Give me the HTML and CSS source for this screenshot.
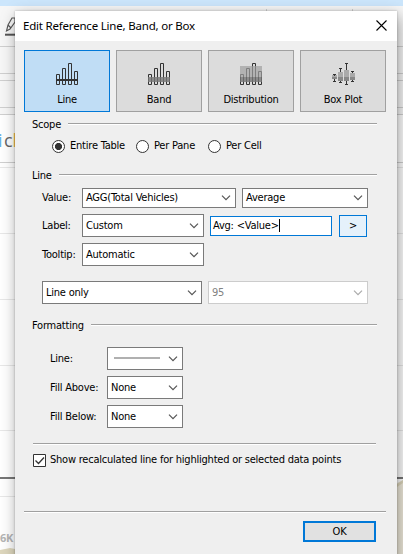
FILE: index.html
```
<!DOCTYPE html>
<html lang="en">
<head>
<meta charset="utf-8">
<title>Edit Reference Line, Band, or Box</title>
<link rel="stylesheet" href="styles.css">
</head>
<body>
<svg class="backdrop" width="403" height="554" viewBox="0 0 403 554" aria-hidden="true">
  <rect width="403" height="554" fill="#fff"/>
  <rect y="6" width="403" height="108" fill="#f7f7f7"/>
  <rect width="403" height="6" fill="#cce6fc"/>
  <g fill="#d0d0d0">
    <path d="M0 46h403v1H0zM0 73h403v1H0zM0 80h403v1H0zM0 107h403v1H0zM0 114h403v1H0zM0 162h403v1H0zM352 9h1v3h-1zM266 9h1v3h-1z"/>
  </g>
  <path fill="#e8e8e8" d="M0 167h403v1H0zM0 233h403v1H0zM0 299h403v1H0zM0 365h403v1H0zM0 430h403v1H0zM0 496h403v1H0z"/>
  <path fill="#777" d="M0 477h403v2H0z"/>
  <path fill="#f0ebdc" d="M397 483l6-3v74h-6z"/>
  <path fill="#ded7bd" d="M0 550l10-2 5 1v5H0zM397 484l6-4v3l-6 4z"/>
  <g fill="none" stroke="#555" stroke-width="1.1">
    <path d="M6.500 31l1.500-6 4-7h3v4l-5 7z M8 25l3 3"/>
    <path d="M5 34.700h11" stroke-width="2"/>
  </g>
  <g class="backdrop-title"><text x="-2" y="147" fill="#69aee5">i</text><text x="4" y="147" fill="#666">c</text><text x="12.500" y="147" fill="#f2b84b">h</text></g>
  <text class="axis-text" x="0" y="542">6K</text>
</svg>

<main class="dialog">
  <header class="titlebar">
    <h1>Edit Reference Line, Band, or Box</h1>
    <svg class="close" width="11" height="11" viewBox="0 0 11 11"><path d="M.5.5l10 10M10.500.5l-10 10" fill="none" stroke="#000" stroke-width="1.100"/></svg>
  </header>

  <nav class="tabs">
    <button class="tab active">
      <svg width="22" height="22" viewBox="0 0 22 22"><g fill="none" stroke="#333"><path d="M.5 11.500h3v10h-3zM6.500 5.500h3v16h-3zM12.500.5h3v21h-3zM18.500 8.500h3v13h-3z"/></g><path d="M0 16h22v2H0z" fill="#333"/></svg>
      <span>Line</span>
    </button>
    <button class="tab">
      <svg width="22" height="22" viewBox="0 0 22 22"><g fill="none" stroke="#333"><path d="M.5 11.500h3v10h-3zM6.500 5.500h3v16h-3zM12.500.5h3v21h-3zM18.500 8.500h3v13h-3z"/></g><path d="M0 14h22v5H0z" fill="#777" fill-opacity=".8"/></svg>
      <span>Band</span>
    </button>
    <button class="tab">
      <svg width="22" height="22" viewBox="0 0 22 22"><g fill="none" stroke="#333"><path d="M.5 11.500h3v10h-3zM6.500 5.500h3v16h-3zM12.500.5h3v21h-3zM18.500 8.500h3v13h-3z"/></g><path d="M0 3h22v11H0z" fill="#a0a0a0" fill-opacity=".7"/><path d="M0 14h22v5H0z" fill="#777" fill-opacity=".8"/></svg>
      <span>Distribution</span>
    </button>
    <button class="tab">
      <svg width="23" height="22" viewBox="0 0 23 22"><path d="M0 12h5v3H0zM6 9h5v5H6zM12 7h5v7h-5zM18 10h5v4h-5z" fill="#aaa"/><path d="M0 14h5v2H0zM6 14h5v4H6zM12 14h5v4h-5zM18 14h5v3h-5z" fill="#888"/><path d="M1 11.500h3M1 18.500h3M7 5.500h3M7 19.500h3M13 .5h3M13 21.500h3M19 8.500h3M19 18.500h3M2.500 11v2M2.500 16v3M8.500 5v4M8.500 18v2M14.500 0v7M14.500 18v4M20.500 8v2M20.500 17v2" fill="none" stroke="#333"/></svg>
      <span>Box Plot</span>
    </button>
  </nav>

  <div class="section scope"><h2>Scope</h2><i></i></div>
  <div class="radios">
    <label class="r1"><i class="radio on"></i><span>Entire Table</span></label>
    <label class="r2"><i class="radio"></i><span>Per Pane</span></label>
    <label class="r3"><i class="radio"></i><span>Per Cell</span></label>
  </div>

  <div class="section line"><h2>Line</h2><i></i></div>
  <div class="row value-row">
    <span class="label">Value:</span>
    <div class="select s154"><span>AGG(Total Vehicles)</span><svg class="chev" width="10" height="6" viewBox="0 0 10 6"><path d="M1 .7l4 4 4-4"/></svg></div>
    <div class="select s126"><span>Average</span><svg class="chev" width="10" height="6" viewBox="0 0 10 6"><path d="M1 .7l4 4 4-4"/></svg></div>
  </div>
  <div class="row label-row">
    <span class="label">Label:</span>
    <div class="select s122"><span>Custom</span><svg class="chev" width="10" height="6" viewBox="0 0 10 6"><path d="M1 .7l4 4 4-4"/></svg></div>
    <div class="input"><span>Avg: &lt;Value&gt;</span><i class="caret"></i></div>
    <button class="more">&gt;</button>
  </div>
  <div class="row tooltip-row">
    <span class="label">Tooltip:</span>
    <div class="select s122"><span>Automatic</span><svg class="chev" width="10" height="6" viewBox="0 0 10 6"><path d="M1 .7l4 4 4-4"/></svg></div>
  </div>
  <div class="row kind-row">
    <div class="select s160"><span>Line only</span><svg class="chev" width="10" height="6" viewBox="0 0 10 6"><path d="M1 .7l4 4 4-4"/></svg></div>
    <div class="select s160 disabled"><span>95</span><svg class="chev" width="10" height="6" viewBox="0 0 10 6"><path d="M1 .7l4 4 4-4"/></svg></div>
  </div>

  <div class="section formatting"><h2>Formatting</h2><i></i></div>
  <div class="format">
    <span>Line:</span>
    <div class="select"><b class="sample"></b><svg class="chev" width="10" height="6" viewBox="0 0 10 6"><path d="M1 .7l4 4 4-4"/></svg></div>
    <span>Fill Above:</span>
    <div class="select"><span>None</span><svg class="chev" width="10" height="6" viewBox="0 0 10 6"><path d="M1 .7l4 4 4-4"/></svg></div>
    <span>Fill Below:</span>
    <div class="select"><span>None</span><svg class="chev" width="10" height="6" viewBox="0 0 10 6"><path d="M1 .7l4 4 4-4"/></svg></div>
  </div>

  <div class="rule upper"></div>
  <label class="check"><svg width="13" height="13" viewBox="0 0 13 13"><path d="M.5.5h12v12H.5z" fill="#fff" stroke="#333"/><path d="M2.500 6.500l3 3 5.500-6" fill="none" stroke="#333" stroke-width="1.300"/></svg><span>Show recalculated line for highlighted or selected data points</span></label>
  <div class="rule lower"></div>
  <button class="ok">OK</button>
</main>
</body>
</html>
```
FILE: styles.css
```
* { box-sizing: border-box; }
body {
  margin: 0;
  width: 403px;
  height: 554px;
  overflow: hidden;
  position: relative;
  font: 11px/16px "DejaVu Sans Condensed", "Noto Sans", sans-serif;
  letter-spacing: -0.22px;
  color: #000;
}
.backdrop { position: absolute; left: 0; top: 0; }
.backdrop-title { font: 18px "Open Sans", sans-serif; }
.axis-text { font: bold 11px "Open Sans", sans-serif; fill: #b5b5b5; }
button { font: inherit; letter-spacing: inherit; color: inherit; padding: 0; }
span { white-space: nowrap; }

.dialog {
  position: relative;
  display: flex;
  flex-direction: column;
  width: 382px;
  height: 560px;
  margin: 11px 0 0 15px;
  background: #efefef;
  box-shadow: 0 0 2px rgba(0, 0, 0, .25), 2px 5px 15px rgba(0, 0, 0, .38);
}
.titlebar {
  display: flex;
  justify-content: space-between;
  align-items: center;
  height: 30px;
  padding: 0 10px 0 8px;
  background: #fff;
}
.titlebar h1 { margin: 0; font: 11.5px/16px "Noto Sans", sans-serif; letter-spacing: -0.2px; }
.close { margin-top: -1px; }

.tabs { display: flex; gap: 6px; margin: 9px 0 0 9px; }
.tab {
  display: flex;
  flex-direction: column;
  align-items: center;
  width: 86px;
  height: 62px;
  padding-top: 12px;
  border: 1px solid #a0a0a0;
  background: #dcdcdc;
}
.tab.active { border-color: #0078d7; background: #c0ddf5; }
.tab span { margin-top: 7px; }

.section { display: flex; height: 16px; margin-left: 17px; width: 345px; gap: 7px; }
.section h2 { margin: 0; font: inherit; }
.section i { flex: 1; height: 2px; margin-top: 6px; background: #a0a0a0; border-bottom: 1px solid #fff; }
.scope { margin-top: 5px; }
.line { margin-top: 14px; }
.formatting { margin-top: 14px; }

.radios { display: flex; height: 16px; margin: 5px 0 0 37px; align-items: center; }
.radios label { display: flex; align-items: center; gap: 5px; }
.r1 { width: 84px; }
.r2 { width: 72px; }
.radio { flex: none; width: 13px; height: 13px; border: 1px solid #333; border-radius: 50%; background: #fff; }
.radio.on { background: radial-gradient(circle, #333 3.200px, #fff 3.900px); }

.row { display: flex; align-items: center; gap: 6px; margin-left: 27px; }
.label { width: 34px; }
.select {
  display: flex;
  align-items: center;
  justify-content: space-between;
  height: 23px;
  padding: 0 4px 0 3px;
  border: 1px solid #7a7a7a;
  background: #fff;
}
.chev { fill: none; stroke: #555; stroke-width: 1.200; }
.s154 { width: 154px; }
.s126 { width: 126px; }
.s122 { width: 122px; }
.s160 { width: 160px; }
.disabled { border-color: #ccc; color: #838383; }
.disabled .chev { stroke: #aaa; }
.value-row { margin-top: 4px; }
.value-row .select { height: 20px; }
.label-row { margin-top: 6px; }
.tooltip-row { margin-top: 6px; }
.kind-row { margin-top: 15px; }
.input { display: flex; align-items: center; width: 122px; height: 20px; padding-left: 2px; border: 1px solid #0078d7; background: #fff; }
.caret { width: 1px; height: 13px; background: #000; }
.more { width: 28px; height: 22px; margin-left: 1px; border: 1px solid #0078d7; background: #e5f1fb; }

.format {
  display: grid;
  grid-template-columns: 57px 76px;
  row-gap: 6px;
  align-items: center;
  margin: 13px 0 0 35px;
}
.sample { width: 46px; height: 2px; margin: -2px 0 0 3px; background: #b0b0b0; }
.rule { height: 2px; background: #a0a0a0; border-bottom: 1px solid #fff; }
.upper { width: 343px; margin: 15px 0 0 18px; }
.check { display: flex; align-items: center; gap: 4px; height: 16px; margin: 7px 0 0 18px; }
.lower { width: 362px; margin: 43px 0 0 9px; }
.ok { width: 73px; height: 21px; margin: 8px 0 0 288px; border: 2px solid #0078d7; background: #e1e1e1; }
```
